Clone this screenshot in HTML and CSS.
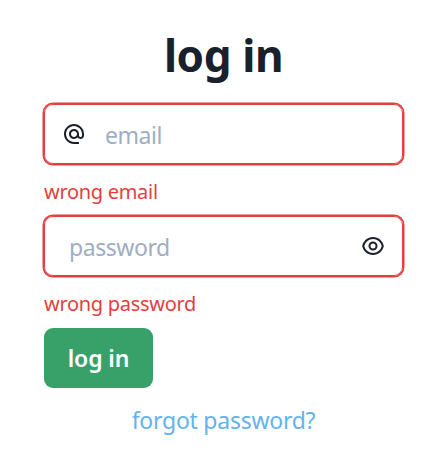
FILE: index.html
```html
<!DOCTYPE html>
<html lang="en">
<head>
<meta charset="utf-8">
<title>log in</title>
<link rel="stylesheet" href="styles.css">
</head>
<body>
<main class="login">
  <h1 class="title">log in</h1>
  <form class="form">
    <div class="field">
      <svg class="icon" viewBox="0 0 24 24"><path d="M12 1.95c-5.52 0-10 4.48-10 10s4.48 10 10 10h5v-2h-5c-4.34 0-8-3.66-8-8s3.66-8 8-8 8 3.66 8 8v1.43c0 .79-.71 1.57-1.5 1.57s-1.5-.78-1.5-1.57v-1.43c0-2.76-2.24-5-5-5s-5 2.24-5 5 2.24 5 5 5c1.38 0 2.64-.56 3.54-1.47.65.89 1.77 1.47 2.96 1.47 1.97 0 3.5-1.6 3.5-3.57v-1.43c0-5.52-4.48-10-10-10zm0 13c-1.66 0-3-1.34-3-3s1.34-3 3-3 3 1.34 3 3-1.34 3-3 3z"/></svg>
      <input class="input" type="email" placeholder="email">
    </div>
    <p class="error">wrong email</p>
    <div class="field field-password">
      <input class="input" type="password" placeholder="password">
      <svg class="icon" viewBox="0 0 24 24"><path d="M12 3c5.392 0 9.878 3.88 10.819 9-.94 5.12-5.427 9-10.819 9S2.122 17.12 1.181 12C2.121 6.88 6.608 3 12 3zm0 16a9.005 9.005 0 0 0 8.777-7 9.005 9.005 0 0 0-17.554 0A9.005 9.005 0 0 0 12 19zm0-2.5a4.5 4.5 0 1 1 0-9 4.5 4.5 0 0 1 0 9zm0-2a2.5 2.5 0 1 0 0-5 2.5 2.5 0 0 0 0 5z"/></svg>
    </div>
    <p class="error">wrong password</p>
    <button class="submit" type="button">log in</button>
  </form>
  <a class="forgot">forgot password?</a>
</main>
</body>
</html>
```
FILE: styles.css
```css
* { box-sizing: border-box; }
body {
  margin: 0;
  background: #fff;
  color: #1a202c;
  font-family: "Segoe UI", "Noto Sans", sans-serif;
}
.login {
  width: 359px;
  margin-left: 44px;
  padding-top: 25px;
  display: flex;
  flex-direction: column;
}
.title {
  margin: 0;
  height: 60px;
  font-size: 44px;
  line-height: 60px;
  font-weight: 700;
  text-align: center;
  letter-spacing: -0.4px;
}
.form { margin-top: 19px; }
.field {
  height: 60px;
  display: flex;
  align-items: center;
  gap: 19px;
  padding: 0 17px;
  border: 1px solid #e53e3e;
  border-radius: 9px;
  box-shadow: 0 0 0 1.5px #e53e3e;
}
.field-password { padding: 0 17px 0 24px; }
.icon { width: 24px; height: 24px; flex: none; fill: currentColor; }
.input {
  flex: 1;
  min-width: 0;
  height: 58px;
  padding: 2px 0 0;
  border: 0;
  outline: 0;
  background: transparent;
  font: 400 23px/56px "Segoe UI", "Noto Sans", sans-serif;
  letter-spacing: -0.45px;
}
.input::placeholder { color: #a0aec0; opacity: 1; }
.error {
  height: 52px;
  margin: 0;
  padding-top: 13px;
  color: #e53e3e;
  font-size: 20px;
  line-height: 30px;
  letter-spacing: -0.3px;
}
.submit {
  display: block;
  width: 109px;
  height: 60px;
  padding: 0;
  border: 0;
  border-radius: 9px;
  background: #38a169;
  color: #fff;
  font: 600 23px/60px "Segoe UI", "Noto Sans", sans-serif;
  letter-spacing: -0.1px;
}
.forgot {
  align-self: center;
  margin-top: 14px;
  color: #63b3ed;
  font-size: 23px;
  line-height: 36px;
  letter-spacing: -0.25px;
}
```
